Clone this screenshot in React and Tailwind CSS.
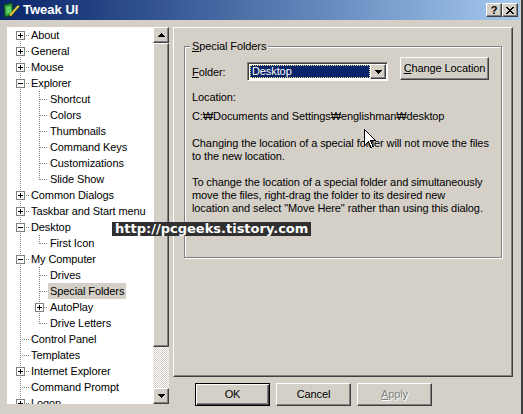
import React from "react";

const rows = [
  { l: 0, t: "About", b: "+", first: true },
  { l: 0, t: "General", b: "+" },
  { l: 0, t: "Mouse", b: "+" },
  { l: 0, t: "Explorer", b: "-" },
  { l: 1, t: "Shortcut" },
  { l: 1, t: "Colors" },
  { l: 1, t: "Thumbnails" },
  { l: 1, t: "Command Keys" },
  { l: 1, t: "Customizations" },
  { l: 1, t: "Slide Show", last: true },
  { l: 0, t: "Common Dialogs", b: "+" },
  { l: 0, t: "Taskbar and Start menu", b: "+" },
  { l: 0, t: "Desktop", b: "-" },
  { l: 1, t: "First Icon", last: true },
  { l: 0, t: "My Computer", b: "-" },
  { l: 1, t: "Drives" },
  { l: 1, t: "Special Folders", sel: true },
  { l: 1, t: "AutoPlay", b: "+" },
  { l: 1, t: "Drive Letters", last: true },
  { l: 0, t: "Control Panel" },
  { l: 0, t: "Templates" },
  { l: 0, t: "Internet Explorer", b: "+" },
  { l: 0, t: "Command Prompt" },
  { l: 0, t: "Logon", b: "+" },
];

const dot = { stroke: "#808080", strokeDasharray: "1 1", shapeRendering: "crispEdges" };

function Box({ x, sign }) {
  return (
    <g shapeRendering="crispEdges">
      <rect x={x + 0.5} y={4.5} width={8} height={8} fill="#fff" stroke="#808080" />
      <line x1={x + 2} x2={x + 7} y1={8.5} y2={8.5} stroke="#000" />
      {sign === "+" && <line x1={x + 4.5} x2={x + 4.5} y1={6} y2={11} stroke="#000" />}
    </g>
  );
}

function Gutter({ r }) {
  if (r.l === 0) {
    return (
      <svg width="22" height="16" className="shrink-0">
        <line x1={13.5} x2={13.5} y1={r.first ? 8 : 0} y2={16} {...dot} />
        <line x1={13} x2={22} y1={8.5} y2={8.5} {...dot} />
        {r.b && <Box x={9} sign={r.b} />}
      </svg>
    );
  }
  return (
    <svg width="41" height="16" className="shrink-0">
      <line x1={13.5} x2={13.5} y1={0} y2={16} {...dot} />
      <line x1={32.5} x2={32.5} y1={0} y2={r.last ? 9 : 16} {...dot} />
      <line x1={33} x2={41} y1={8.5} y2={8.5} {...dot} />
      {r.b && <Box x={28} sign={r.b} />}
    </svg>
  );
}

const raised =
  "border border-t-white border-l-white border-r-[#404040] border-b-[#404040] shadow-[inset_-1px_-1px_#808080] bg-[#d4d0c8]";

function Tri({ up }) {
  return (
    <svg width="7" height="4" viewBox="0 0 7 4" shapeRendering="crispEdges">
      {up ? <path d="M3 0h1v1h1v1h1v1h1v1H0V3h1V2h1V1h1z" fill="#000" /> : <path d="M0 0h7v1H6v1H5v1H4v1H3V3H2V2H1V1H0z" fill="#000" />}
    </svg>
  );
}

export default function App() {
  return (
    <div
      className="relative w-[523px] h-[414px] overflow-hidden bg-[#d4d0c8] text-black flex flex-col shadow-[inset_-2px_0_#404040] tracking-[-0.1px]"
      style={{ fontFamily: '"Liberation Sans", Arial, sans-serif' }}
    >
      {/* Title bar */}
      <div className="h-[20px] mr-[3px] flex items-center bg-gradient-to-r from-[#0a246a] to-[#a6caf0] pl-[3px] tracking-normal">
        <svg width="17" height="16" viewBox="0 0 17 16" className="shrink-0">
          <path d="M1 3 L9 1 L10 13 L2 15 Z" fill="#2e9a3a" stroke="#0c4a14" strokeWidth="1" />
          <path d="M3 5 L8 4 L8.5 11 L3.5 12 Z" fill="#5fcf6a" />
          <path d="M6 13 L15 3 L16.5 4.5 L7.5 14.5 Z" fill="#f5e04a" stroke="#6b5a10" strokeWidth="0.7" />
          <path d="M6 13 L7.5 14.5 L5.5 15 Z" fill="#222" />
        </svg>
        <span className="ml-[3px] text-white font-bold text-[13px] leading-[16px]">Tweak UI</span>
        <div className="ml-auto mr-[2px] flex">
          <div className={`${raised} w-[16px] h-[14px] flex items-center justify-center text-[11px] font-bold leading-none`}>?</div>
          <div className={`${raised} w-[16px] h-[14px] flex items-center justify-center`}>
            <svg width="8" height="7" viewBox="0 0 8 7" shapeRendering="crispEdges">
              <path d="M0 0h2v1h1v1h2V1h1V0h2v1H7v1H6v1H5v1h1v1h1v1h1v1H6V6H5V5H3v1H2v1H0V6h1V5h1V4h1V3H2V2H1V1H0z" fill="#000" />
            </svg>
          </div>
        </div>
      </div>

      {/* Body */}
      <div className="flex pl-[7px] pt-[7px] gap-[4px]">
        {/* Tree + scrollbar */}
        <div className="flex w-[162px] h-[377px] shrink-0">
          <div className="w-[146px] h-full bg-white overflow-hidden">
            {rows.map((r, i) => (
              <div key={i} className="flex h-[16px] items-center">
                <Gutter r={r} />
                <span
                  className={`px-[2px] text-[11px] leading-[16px] whitespace-nowrap ${r.sel ? "bg-[#d4d0c8]" : ""}`}
                >
                  {r.t}
                </span>
              </div>
            ))}
          </div>
          <div className="w-[16px] h-full flex flex-col">
            <div className={`${raised} h-[16px] flex items-center justify-center`}>
              <Tri up />
            </div>
            <div className={`${raised} h-[304px]`} />
            <div className="flex-1 bg-[repeating-conic-gradient(#ffffff_0_25%,#d4d0c8_0_50%)] bg-[length:2px_2px]" />
            <div className={`${raised} h-[16px] flex items-center justify-center`}>
              <Tri />
            </div>
          </div>
        </div>

        {/* Right column */}
        <div className="flex flex-col">
          <div className="w-[340px] h-[350px] border border-t-white border-l-white border-r-[#404040] border-b-[#404040] shadow-[inset_-1px_-1px_#808080] pl-[10px] pt-[18px]">
            <div className="relative w-[318px] h-[212px] border border-[#808080] shadow-[inset_1px_1px_#fff,1px_1px_#fff] pl-[7px] pt-[10px] text-[11px]">
              <span className="absolute left-[5px] top-[-7px] px-[2px] bg-[#d4d0c8] leading-[13px]">
                <span className="underline">S</span>pecial Folders
              </span>
              <div className="flex items-start">
                <div className="w-[55px] mt-[8px] leading-[14px]">
                  <span className="underline">F</span>older:
                </div>
                <div className="mt-[5px] w-[141px] h-[19px] bg-white border border-t-[#808080] border-l-[#808080] border-r-white border-b-white shadow-[inset_1px_1px_#404040] flex p-[2px]">
                  <div className="flex-1 bg-[#0a246a] border border-dotted border-[#f0e68c] text-white leading-[11px] pl-[1px]">
                    Desktop
                  </div>
                  <div className={`${raised} w-[16px] -my-[1px] -mr-[1px] flex items-center justify-center`}>
                    <Tri />
                  </div>
                </div>
                <div className={`${raised} ml-[12px] w-[89px] h-[23px] flex items-center justify-center leading-none`}>
                  <span>
                    <span className="underline">C</span>hange Location
                  </span>
                </div>
              </div>
              <div className="mt-[10px] leading-[13px]">Location:</div>
              <div className="mt-[6px] leading-[13px]">C:₩Documents and Settings₩englishman₩desktop</div>
              <div className="mt-[14px] leading-[13px]">
                Changing the location of a special folder will not move the files
                <br />
                to the new location.
              </div>
              <div className="mt-[13px] leading-[13px]">
                To change the location of a special folder and simultaneously
                <br />
                move the files, right-drag the folder to its desired new
                <br />
                location and select "Move Here" rather than using this dialog.
              </div>
            </div>
          </div>
          <div className="flex gap-[6px] mt-[6px] pl-[22px] text-[11px]">
            <div className="w-[75px] h-[23px] border border-black shadow-[inset_1px_1px_#fff,inset_-1px_-1px_#404040,inset_-2px_-2px_#808080] flex items-center justify-center">
              OK
            </div>
            <div className={`${raised} w-[75px] h-[23px] flex items-center justify-center`}>Cancel</div>
            <div className={`${raised} w-[75px] h-[23px] flex items-center justify-center text-[#808080] [text-shadow:1px_1px_#fff]`}>
              <span>
                <span className="underline">A</span>pply
              </span>
            </div>
          </div>
        </div>
      </div>

      {/* watermark */}
      <div
        className="absolute left-[112px] top-[222px] h-[14px] bg-[#303030] text-white font-bold text-[13px] leading-[14px] px-[3px] whitespace-nowrap tracking-normal"
        style={{ fontFamily: '"DejaVu Sans", sans-serif' }}
      >
        http://pcgeeks.tistory.com
      </div>

      {/* mouse cursor */}
      <svg className="absolute left-[364px] top-[129px]" width="12" height="20" viewBox="0 0 12 20" shapeRendering="crispEdges">
        <path d="M0.5 0.5 V16.5 L4.5 12.5 L7 18.5 L9 17.5 L6.5 11.5 H11.5 Z" fill="#fff" stroke="#000" />
      </svg>
    </div>
  );
}
